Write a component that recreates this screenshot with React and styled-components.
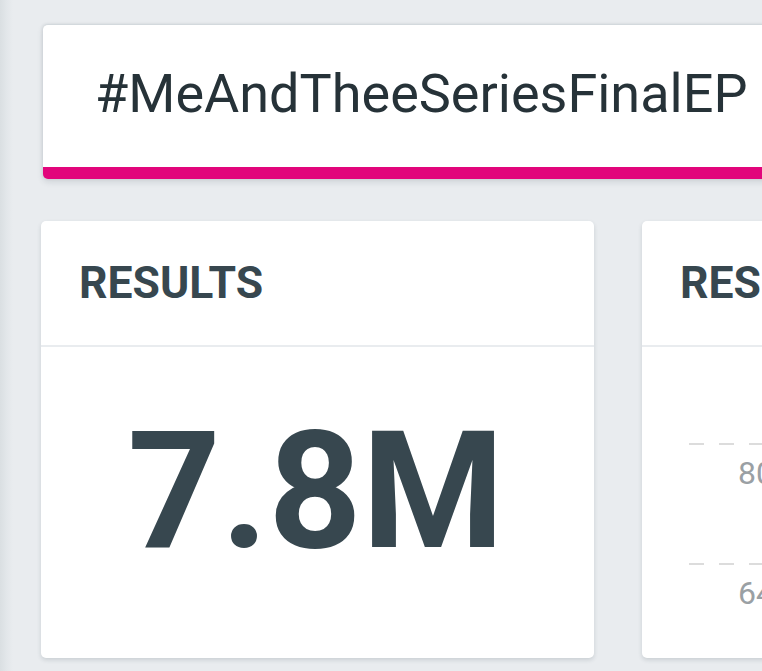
import React from "react";
import styled, { createGlobalStyle } from "styled-components";

const Global = createGlobalStyle`
  html, body {
    margin: 0;
    padding: 0;
    overflow: hidden;
  }
  body {
    background: linear-gradient(to right, #dadfe2 0px, #e3e7ea 7px, #e9ecef 13px, #e9ecef 100%);
    font-family: Roboto, "Noto Sans", "Liberation Sans", sans-serif;
    width: 762px;
    height: 671px;
  }
`;

const Page = styled.div`
  width: 1400px;
  padding-top: 24px;
  display: flex;
  flex-direction: column;
  gap: 42px;
`;

const TitleCard = styled.div`
  margin-left: 43px;
  height: 155px;
  box-sizing: border-box;
  background: #fff;
  border-top: 1px solid #d3d9dd;
  border-bottom: 12px solid #e2057b;
  border-radius: 5px;
  box-shadow: 0 3px 6px rgba(40, 55, 70, 0.14), -1px 0 3px rgba(40, 55, 70, 0.08);
  display: flex;
  align-items: center;
  padding-left: 52px;
  padding-bottom: 5px;
`;

const Title = styled.div`
  font-size: 54px;
  font-weight: 400;
  color: #263238;
`;

const Row = styled.div`
  margin-left: 41px;
  display: flex;
  gap: 48px;
`;

const Card = styled.div`
  width: 553px;
  height: 437px;
  background: #fff;
  border-radius: 5px;
  box-shadow: 0 2px 4px rgba(40, 55, 70, 0.16);
  display: flex;
  flex-direction: column;
  overflow: hidden;
`;

const CardHeader = styled.div`
  height: 124px;
  flex: none;
  display: flex;
  align-items: center;
  padding-left: 38px;
  border-bottom: 2px solid #e9ecef;
  font-size: 44.5px;
  font-weight: 700;
  color: #37474f;
  white-space: nowrap;
`;

const BigBody = styled.div`
  flex: 1;
  display: flex;
  align-items: center;
  justify-content: center;
  padding-bottom: 22px;
`;

const BigNumber = styled.div`
  font-size: 163px;
  font-weight: 700;
  color: #37474f;
  line-height: 1;
  margin-right: 3px;
`;

const ChartBody = styled.div`
  flex: 1;
  padding-top: 96px;
  padding-left: 47px;
  display: flex;
  flex-direction: column;
`;

const GridRow = styled.div`
  height: 120px;
  flex: none;
  display: flex;
  flex-direction: column;
`;

const DashLine = styled.div`
  height: 2px;
  background-image: repeating-linear-gradient(
    to right,
    #dcdcdc 0px,
    #dcdcdc 15px,
    transparent 15px,
    transparent 30px
  );
`;

const AxisLabel = styled.div`
  margin-top: 12px;
  margin-left: 49px;
  font-size: 32px;
  line-height: 32px;
  color: #9aa0a4;
  white-space: nowrap;
`;

export default function App() {
  return (
    <>
      <Global />
      <Page>
        <TitleCard>
          <Title>#MeAndTheeSeriesFinalEP</Title>
        </TitleCard>
        <Row>
          <Card>
            <CardHeader>RESULTS</CardHeader>
            <BigBody>
              <BigNumber>7.8M</BigNumber>
            </BigBody>
          </Card>
          <Card>
            <CardHeader>RESULTS OVER TIME</CardHeader>
            <ChartBody>
              <GridRow>
                <DashLine />
                <AxisLabel>800K</AxisLabel>
              </GridRow>
              <GridRow>
                <DashLine />
                <AxisLabel>640K</AxisLabel>
              </GridRow>
            </ChartBody>
          </Card>
        </Row>
      </Page>
    </>
  );
}
